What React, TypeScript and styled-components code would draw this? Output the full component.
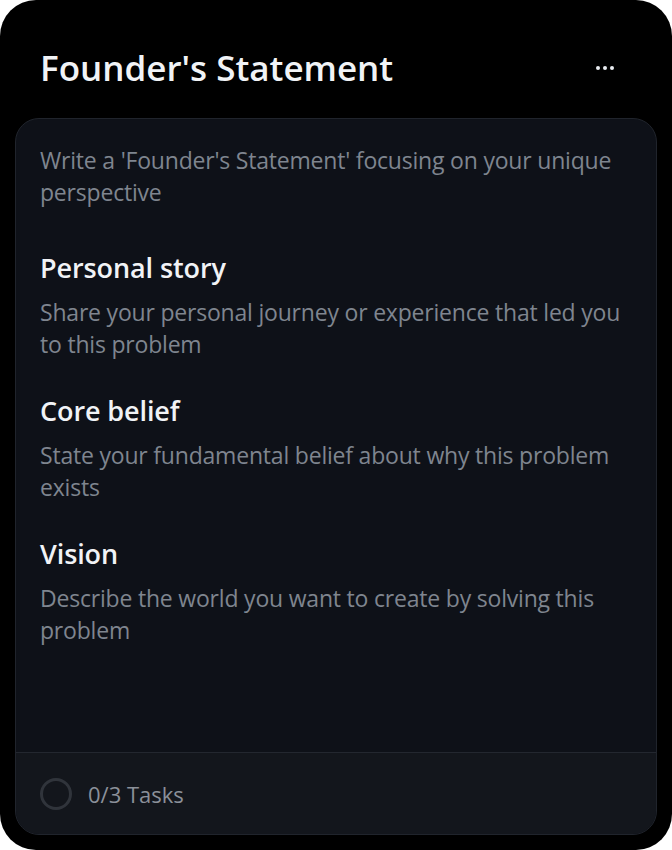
import styled, { createGlobalStyle } from "styled-components";

const GlobalStyle = createGlobalStyle`
  html, body {
    margin: 0;
    padding: 0;
    background: #ffffff;
  }
  * {
    box-sizing: border-box;
  }
`;

const Frame = styled.div`
  width: 672px;
  height: 850px;
  background: #000000;
  border-radius: 36px;
  display: flex;
  flex-direction: column;
  padding: 0 15px 15px;
  font-family: "Open Sans", Roboto, sans-serif;
`;

const Header = styled.header`
  height: 118px;
  display: flex;
  align-items: center;
  justify-content: space-between;
  padding: 18px 43px 0 25px;
`;

const Title = styled.h1`
  margin: 0;
  color: #f1f3f6;
  font-size: 35px;
  font-weight: 600;
  line-height: 44px;
  letter-spacing: 0;
`;

const MoreButton = styled.button`
  display: flex;
  gap: 3px;
  padding: 0;
  border: none;
  background: transparent;
  cursor: pointer;
`;

const Dot = styled.span`
  width: 4px;
  height: 4px;
  border-radius: 50%;
  background: #e9ecf1;
`;

const Card = styled.section`
  flex: 1;
  display: flex;
  flex-direction: column;
  background: #0e1118;
  border: 1px solid #20242c;
  border-radius: 24px;
  overflow: hidden;
`;

const Body = styled.div`
  flex: 1;
  padding: 25px 24px;
  display: flex;
  flex-direction: column;
`;

const Intro = styled.p`
  margin: 0 0 44px;
  color: #7f858f;
  font-size: 23px;
  line-height: 32px;
  letter-spacing: -0.2px;
`;

const Section = styled.div`
  display: flex;
  flex-direction: column;
  gap: 12px;
  margin-bottom: 35px;
`;

const Heading = styled.h2`
  margin: 0;
  color: #f1f3f6;
  font-size: 27px;
  font-weight: 600;
  line-height: 32px;
  letter-spacing: -0.1px;
`;

const Desc = styled.p`
  margin: 0;
  color: #7f858f;
  font-size: 23px;
  line-height: 32px;
  letter-spacing: -0.2px;
`;

const Footer = styled.footer`
  height: 82px;
  border-top: 1px solid #23272f;
  background: #13161c;
  display: flex;
  align-items: center;
  gap: 16px;
  padding: 0 24px;
`;

const Ring = styled.span`
  width: 32px;
  height: 32px;
  border-radius: 50%;
  border: 3px solid #30343b;
`;

const TaskCount = styled.span`
  color: #8b9099;
  font-size: 22px;
`;

const sections = [
  {
    title: "Personal story",
    text: "Share your personal journey or experience that led you to this problem",
  },
  {
    title: "Core belief",
    text: "State your fundamental belief about why this problem exists",
  },
  {
    title: "Vision",
    text: "Describe the world you want to create by solving this problem",
  },
];

export default function App() {
  return (
    <>
      <GlobalStyle />
      <Frame>
        <Header>
          <Title>Founder's Statement</Title>
          <MoreButton aria-label="More options">
            <Dot />
            <Dot />
            <Dot />
          </MoreButton>
        </Header>
        <Card>
          <Body>
            <Intro>
              Write a 'Founder's Statement' focusing on your unique perspective
            </Intro>
            {sections.map((s) => (
              <Section key={s.title}>
                <Heading>{s.title}</Heading>
                <Desc>{s.text}</Desc>
              </Section>
            ))}
          </Body>
          <Footer>
            <Ring />
            <TaskCount>0/3 Tasks</TaskCount>
          </Footer>
        </Card>
      </Frame>
    </>
  );
}
